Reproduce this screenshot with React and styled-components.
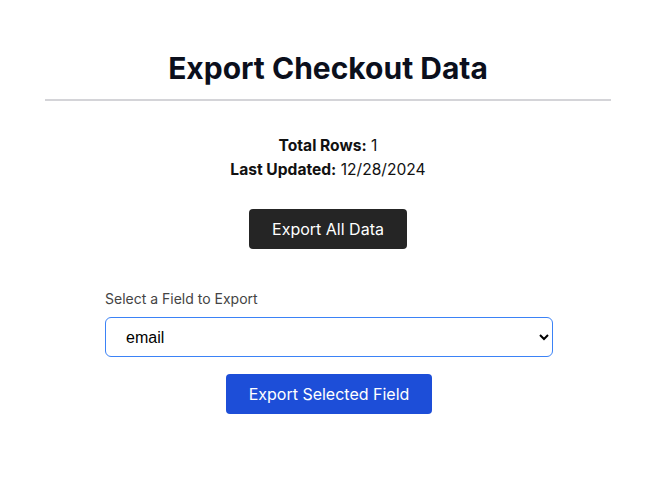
import React, { useState } from 'react';
import styled, { createGlobalStyle } from 'styled-components';

const GlobalStyle = createGlobalStyle`
  body {
    margin: 0;
    background: #fff;
    font-family: Inter, "Noto Sans", sans-serif;
    color: #111827;
  }
`;

const Page = styled.div`
  padding: 0 6px 0 0;
`;

const Container = styled.div`
  width: 566px;
  margin: 0 auto;
  padding-top: 48px;
  display: flex;
  flex-direction: column;
  align-items: center;
`;

const Title = styled.h1`
  margin: 0;
  font-size: 30px;
  font-weight: 700;
  line-height: 40px;
  color: #0b0f1c;
`;

const Divider = styled.hr`
  width: 100%;
  margin: 11px 0 0;
  border: none;
  border-top: 2px solid #d4d4d8;
`;

const Stats = styled.div`
  margin-top: 33px;
  text-align: center;
  font-size: 15.6px;
  line-height: 24px;
  color: #111;
`;

const Label = styled.span`
  font-weight: 700;
`;

const Actions = styled.div`
  margin-top: 27px;
`;

const Button = styled.button`
  height: 40px;
  padding: 0 23px;
  border: none;
  border-radius: 4px;
  background: ${p => p.$bg};
  color: #fff;
  font-family: Inter, "Noto Sans", sans-serif;
  font-size: 16px;
  cursor: pointer;
`;

const Form = styled.div`
  width: 448px;
  margin: 41px 0 0 2px;
  display: flex;
  flex-direction: column;
  align-items: center;
`;

const FieldLabel = styled.label`
  align-self: flex-start;
  font-size: 14px;
  color: #444;
  margin-bottom: 10px;
`;

const Select = styled.select`
  width: 100%;
  height: 40px;
  padding: 0 12px 0 16px;
  border: 1px solid #3b82f6;
  border-radius: 6px;
  background: #fff;
  font-family: "Liberation Sans", Arial, sans-serif;
  font-size: 16px;
  color: #000;
  margin-bottom: 17px;
`;

export default function App() {
  const [field, setField] = useState('email');

  return (
    <Page>
      <GlobalStyle />
      <Container>
        <Title>Export Checkout Data</Title>
        <Divider />
        <Stats>
          <div><Label>Total Rows:</Label> 1</div>
          <div><Label>Last Updated:</Label> 12/28/2024</div>
        </Stats>
        <Actions>
          <Button $bg="#252525">Export All Data</Button>
        </Actions>
        <Form>
          <FieldLabel htmlFor="field">Select a Field to Export</FieldLabel>
          <Select id="field" value={field} onChange={e => setField(e.target.value)}>
            <option value="email">email</option>
            <option value="name">name</option>
            <option value="phone">phone</option>
          </Select>
          <Button $bg="#1d4ed8">Export Selected Field</Button>
        </Form>
      </Container>
    </Page>
  );
}
